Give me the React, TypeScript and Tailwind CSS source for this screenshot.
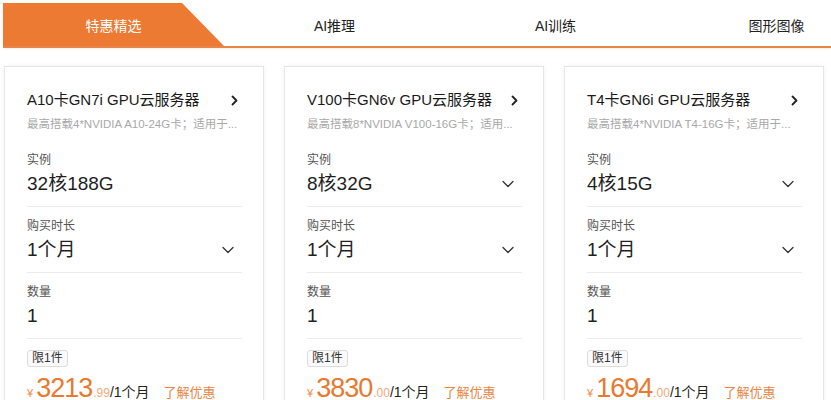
const tabs = ['特惠精选', 'AI推理', 'AI训练', '图形图像'];

interface Product {
  title: string;
  desc: string;
  spec: string;
  specSelect: boolean;
  price: string;
  cents: string;
}

const products: Product[] = [
  {
    title: 'A10卡GN7i GPU云服务器',
    desc: '最高搭载4*NVIDIA A10-24G卡；适用于...',
    spec: '32核188G',
    specSelect: false,
    price: '3213',
    cents: '.99',
  },
  {
    title: 'V100卡GN6v GPU云服务器',
    desc: '最高搭载8*NVIDIA V100-16G卡；适用...',
    spec: '8核32G',
    specSelect: true,
    price: '3830',
    cents: '.00',
  },
  {
    title: 'T4卡GN6i GPU云服务器',
    desc: '最高搭载4*NVIDIA T4-16G卡；适用于...',
    spec: '4核15G',
    specSelect: true,
    price: '1694',
    cents: '.00',
  },
];

function ChevronRight() {
  return (
    <svg className="w-[9px] h-[11px]" viewBox="0 0 9 11" fill="none">
      <path d="M2.5 1.5L6.5 5.5L2.5 9.5" stroke="#222" strokeWidth={1.8} strokeLinecap="round" strokeLinejoin="round" />
    </svg>
  );
}

function ChevronDown() {
  return (
    <svg className="w-[12px] h-[8px]" viewBox="0 0 12 8" fill="none">
      <path d="M1 1.5L6 6.5L11 1.5" stroke="#333" strokeWidth={1.3} strokeLinecap="round" strokeLinejoin="round" />
    </svg>
  );
}

/**
 * One field block: label + value, optional dropdown arrow
 */
function Field({ label, value, select, first }: { label: string; value: string; select: boolean; first?: boolean }) {
  return (
    <div className={`border-b border-[#ececec] pb-[9px] ${first ? 'pt-[20px]' : 'pt-[11px]'}`}>
      <div className="text-[12px] leading-[16px] text-[#555]">{label}</div>
      <div className="mt-[3px] flex items-center justify-between pr-[8px]">
        <span className="text-[19px] leading-[26px] text-[#1f1f1f]">{value}</span>
        {select && <ChevronDown />}
      </div>
    </div>
  );
}

function ProductCard({ p }: { p: Product }) {
  return (
    <div className="w-[260px] shrink-0 bg-white border border-[#e6e6e6] shadow-[0_0_5px_rgba(0,0,0,0.06)] pt-[23px] pl-[22px] pr-[21px] pb-[60px]">
      {/* Title */}
      <div className="flex items-center justify-between pr-[3px]">
        <h3 className="text-[15px] leading-[20px] text-[#1a1a1a]">{p.title}</h3>
        <ChevronRight />
      </div>
      <p className="mt-[6px] text-[11.5px] leading-[16px] text-[#a8a8a8] whitespace-nowrap overflow-hidden">{p.desc}</p>

      <Field label="实例" value={p.spec} select={p.specSelect} first />
      <Field label="购买时长" value="1个月" select />
      <Field label="数量" value="1" select={false} />

      {/* Limit badge */}
      <div className="pt-[6px] h-[23px]">
        <span className="inline-block border border-[#dcdcdc] rounded-[3px] px-[4px] text-[12px] leading-[15px] text-[#333] bg-[#fafafa]">
          限1件
        </span>
      </div>

      {/* Price */}
      <div className="mt-[12px] flex items-baseline whitespace-nowrap">
        <span className="text-[11px] leading-[12px] text-[#ec8a4c] mr-[3px]">¥</span>
        <span className="text-[27px] leading-[28px] text-[#e8792f] tracking-[-1px]">{p.price}</span>
        <span className="ml-[1px] text-[12px] leading-[14px] text-[#f2a97a]">{p.cents}</span>
        <span className="text-[14px] leading-[16px] text-[#222]">/1个月</span>
        <span className="ml-[14px] text-[13px] leading-[16px] text-[#e8843f]">了解优惠</span>
      </div>
    </div>
  );
}

export default function App() {
  return (
    <div
      className="w-[831px] h-[400px] overflow-hidden bg-white"
      style={{ fontFamily: '"Liberation Sans", "Noto Sans CJK SC", sans-serif' }}
    >
      {/* Tabs */}
      <div className="pt-[3px] pl-[3px]">
        <div className="flex h-[45px] border-b-2 border-[#e6864a] shadow-[0_1px_2px_rgba(230,134,74,0.15)] whitespace-nowrap">
          {tabs.map((t, i) =>
            i === 0 ? (
              <div
                key={t}
                className="w-[221px] shrink-0 flex items-center justify-center pt-[3px] bg-[#ec7a33] text-white text-[14px] [clip-path:polygon(0_0,179px_0,100%_100%,0_100%)]"
              >
                {t}
              </div>
            ) : (
              <div key={t} className="w-[221px] shrink-0 flex items-center justify-center pt-[3px] text-[14px] text-[#222]">
                {t}
              </div>
            )
          )}
        </div>
      </div>

      {/* Cards */}
      <div className="flex gap-[20px] pl-[4px] pt-[18px]">
        {products.map((p) => (
          <ProductCard key={p.title} p={p} />
        ))}
      </div>
    </div>
  );
}
